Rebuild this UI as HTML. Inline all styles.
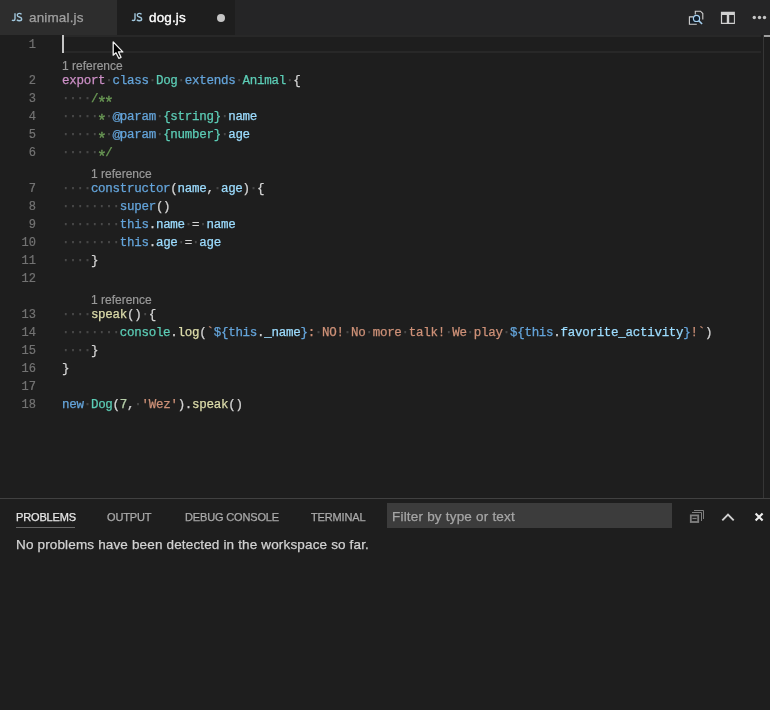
<!DOCTYPE html>
<html><head><meta charset="utf-8">
<style>
*{margin:0;padding:0;box-sizing:border-box}
html,body{width:770px;height:710px;overflow:hidden;background:#1e1e1e}
#wrap{position:absolute;left:0;top:0;width:770px;height:710px;will-change:transform}
body{position:relative;font-family:"Liberation Sans",sans-serif;-webkit-text-stroke:0.25px currentColor}
.abs{position:absolute}
#tabs{left:0;top:0;width:770px;height:35px;background:#252526}
.tab{top:0;height:35px}
.jsi{font-family:"Liberation Sans",sans-serif;font-weight:bold;font-size:10px;color:#7fb0c8;letter-spacing:-0.6px;line-height:10px}
.tname{font-size:13.5px;line-height:16px;letter-spacing:0.15px;white-space:pre}
#editor{left:0;top:35px;width:770px;height:463px;background:#1e1e1e;overflow:hidden}
.ln{position:absolute;left:0;width:36px;margin-top:1px;text-align:right;font-family:"Liberation Mono",monospace;font-size:12px;line-height:18px;color:#737373;-webkit-text-stroke:0.2px #737373}
.cl{position:absolute;left:62px;margin-top:0.5px;font-family:"Liberation Mono",monospace;font-size:12.5px;letter-spacing:-0.28px;line-height:18px;white-space:pre;color:#d4d4d4}
.lens{position:absolute;font-size:12px;line-height:18px;color:#999999;white-space:pre;-webkit-text-stroke:0.2px currentColor}
.w{color:rgba(227,228,226,0.17);-webkit-text-stroke:0.3px rgba(227,228,226,0.17)}
.at{display:inline-block;width:7.22px;letter-spacing:0;text-align:left;font-family:"Liberation Sans",sans-serif;font-size:10px;text-indent:-0.7px}
.ast{display:inline-block;transform:translateY(5px) scale(1.3)}
.k{color:#64a4da}.c{color:#cc8fc6}.t{color:#5ccdb6}.v{color:#9cdcfe}.f{color:#dcdcaa}.s{color:#ce9178}.g{color:#6a9955}.n{color:#b5cea8}
#panel{left:0;top:498px;width:770px;height:212px;background:#1e1e1e;border-top:1px solid #414141}
.ptab{top:12px;font-size:11px;line-height:13px;letter-spacing:-0.15px;white-space:pre;color:rgba(231,231,231,0.6)}
</style></head><body><div id="wrap">
<div id="tabs" class="abs">
  <div class="abs tab" style="left:0;width:117px;background:#2d2d2d">
    <svg class="abs" style="left:8px;top:8px" width="20" height="18" viewBox="0 0 20 18"><path d="M7 5.2V10.7Q7 12.5 5.4 12.5Q4.5 12.5 4 12" fill="none" stroke="#a0c6dc" stroke-width="1.4"/><path d="M13.5 6.4Q12.8 5.4 11.4 5.4Q9.3 5.4 9.3 7.2Q9.3 8.5 11.4 9Q13.7 9.6 13.7 11Q13.7 12.8 11.3 12.8Q9.7 12.8 8.9 11.8" fill="none" stroke="#a0c6dc" stroke-width="1.4"/></svg>
    <div class="abs tname" style="left:29px;top:10px;color:#a0a0a0">animal.js</div>
  </div>
  <div class="abs tab" style="left:117px;width:118px;background:#1e1e1e">
    <svg class="abs" style="left:11px;top:8px" width="20" height="18" viewBox="0 0 20 18"><path d="M7 5.2V10.7Q7 12.5 5.4 12.5Q4.5 12.5 4 12" fill="none" stroke="#a0c6dc" stroke-width="1.4"/><path d="M13.5 6.4Q12.8 5.4 11.4 5.4Q9.3 5.4 9.3 7.2Q9.3 8.5 11.4 9Q13.7 9.6 13.7 11Q13.7 12.8 11.3 12.8Q9.7 12.8 8.9 11.8" fill="none" stroke="#a0c6dc" stroke-width="1.4"/></svg>
    <div class="abs tname" style="left:32px;top:9.5px;color:#ffffff;-webkit-text-stroke:0.35px #ffffff">dog.js</div>
    <div class="abs" style="left:100px;top:14px;width:8px;height:8px;border-radius:50%;background:#c5c5c5"></div>
  </div>
  <!-- open preview icon -->
  <svg class="abs" style="left:680px;top:0" width="30" height="30" viewBox="0 0 30 30">
    <path d="M15.3 14.6V11.2H20.5L22.8 13.5V19.6" fill="none" stroke="#d0d0d0" stroke-width="1.1"/>
    <rect x="9.8" y="17" width="7" height="7" fill="#141c24"/>
    <path d="M13 16.9H9.4V24.2H16.8" fill="none" stroke="#d0d0d0" stroke-width="1.1"/>
    <circle cx="16.5" cy="18.4" r="3.1" fill="#0f1c2a" stroke="#a6d0f0" stroke-width="1.2"/>
    <path d="M18.7 20.6L22.1 24" stroke="#a6d0f0" stroke-width="1.5"/>
  </svg>
  <!-- split editor icon -->
  <svg class="abs" style="left:716px;top:6px" width="24" height="24" viewBox="0 0 24 24">
    <path d="M4.9 5.7H18.9V18.1H4.9Z M6.1 9H10.8V16.7H6.1Z M13.2 9H17.9V16.7H13.2Z" fill="#d0d0d0" fill-rule="evenodd"/>
  </svg>
  <!-- more icon -->
  <svg class="abs" style="left:750px;top:13px" width="20" height="10" viewBox="0 0 20 10">
    <circle cx="4.3" cy="4.5" r="1.7" fill="#c5c5c5"/>
    <circle cx="9.5" cy="4.5" r="1.7" fill="#c5c5c5"/>
    <circle cx="14.5" cy="4.5" r="1.7" fill="#c5c5c5"/>
  </svg>
</div>

<div id="editor" class="abs">
  <!-- current line highlight -->
  <div class="abs" style="left:62px;top:0;width:699px;height:18px;border-top:2px solid #282828;border-bottom:2px solid #282828"></div>
  <!-- line numbers -->
  <div class="ln" style="top:0">1</div>
  <div class="ln" style="top:36px">2</div>
  <div class="ln" style="top:54px">3</div>
  <div class="ln" style="top:72px">4</div>
  <div class="ln" style="top:90px">5</div>
  <div class="ln" style="top:108px">6</div>
  <div class="ln" style="top:144px">7</div>
  <div class="ln" style="top:162px">8</div>
  <div class="ln" style="top:180px">9</div>
  <div class="ln" style="top:198px">10</div>
  <div class="ln" style="top:216px">11</div>
  <div class="ln" style="top:234px">12</div>
  <div class="ln" style="top:270px">13</div>
  <div class="ln" style="top:288px">14</div>
  <div class="ln" style="top:306px">15</div>
  <div class="ln" style="top:324px">16</div>
  <div class="ln" style="top:342px">17</div>
  <div class="ln" style="top:360px">18</div>

  <!-- code lens -->
  <div class="lens" style="left:62px;top:22px">1 reference</div>
  <div class="lens" style="left:91px;top:130px">1 reference</div>
  <div class="lens" style="left:91px;top:256px">1 reference</div>

  <!-- code -->
  <div class="cl" style="top:36px"><span class="c">export</span><span class="w">·</span><span class="k">class</span><span class="w">·</span><span class="t">Dog</span><span class="w">·</span><span class="k">extends</span><span class="w">·</span><span class="t">Animal</span><span class="w">·</span>{</div>
  <div class="cl" style="top:54px"><span class="w">····</span><span class="g">/<span class="ast">*</span><span class="ast">*</span></span></div>
  <div class="cl" style="top:72px"><span class="w">·····</span><span class="g ast">*</span><span class="w">·</span><span class="k"><span class="at">@</span>param</span><span class="w">·</span><span class="t">{string}</span><span class="w">·</span><span class="v">name</span></div>
  <div class="cl" style="top:90px"><span class="w">·····</span><span class="g ast">*</span><span class="w">·</span><span class="k"><span class="at">@</span>param</span><span class="w">·</span><span class="t">{number}</span><span class="w">·</span><span class="v">age</span></div>
  <div class="cl" style="top:108px"><span class="w">·····</span><span class="g"><span class="ast">*</span>/</span></div>
  <div class="cl" style="top:144px"><span class="w">····</span><span class="k">constructor</span>(<span class="v">name</span>,<span class="w">·</span><span class="v">age</span>)<span class="w">·</span>{</div>
  <div class="cl" style="top:162px"><span class="w">········</span><span class="k">super</span>()</div>
  <div class="cl" style="top:180px"><span class="w">········</span><span class="k">this</span>.<span class="v">name</span><span class="w">·</span>=<span class="w">·</span><span class="v">name</span></div>
  <div class="cl" style="top:198px"><span class="w">········</span><span class="k">this</span>.<span class="v">age</span><span class="w">·</span>=<span class="w">·</span><span class="v">age</span></div>
  <div class="cl" style="top:216px"><span class="w">····</span>}</div>
  <div class="cl" style="top:270px"><span class="w">····</span><span class="f">speak</span>()<span class="w">·</span>{</div>
  <div class="cl" style="top:288px"><span class="w">········</span><span class="t">console</span>.<span class="f">log</span>(<span class="s">`</span><span class="k">${this</span>.<span class="v">_name</span><span class="k">}</span><span class="s">:<span class="w">·</span>NO!<span class="w">·</span>No<span class="w">·</span>more<span class="w">·</span>talk!<span class="w">·</span>We<span class="w">·</span>play<span class="w">·</span></span><span class="k">${this</span>.<span class="v">favorite_activity</span><span class="k">}</span><span class="s">!`</span>)</div>
  <div class="cl" style="top:306px"><span class="w">····</span>}</div>
  <div class="cl" style="top:324px">}</div>
  <div class="cl" style="top:360px"><span class="k">new</span><span class="w">·</span><span class="t">Dog</span>(<span class="n">7</span>,<span class="w">·</span><span class="s">'Wez'</span>).<span class="f">speak</span>()</div>

  <!-- cursor -->
  <div class="abs" style="left:62px;top:0;width:2px;height:18px;background:#c4c4c4"></div>

  <!-- overview ruler -->
  <div class="abs" style="left:763px;top:0;width:1px;height:463px;background:#363636"></div>
  <div class="abs" style="left:764px;top:0;width:6px;height:2px;background:#a0a0a0"></div>
</div>

<!-- mouse pointer -->
<svg class="abs" style="left:105px;top:36px" width="25" height="25" viewBox="0 0 25 25">
  <path d="M8.2 5.9V19.2L11 16.8L13.8 22.3L16 21.3L13.5 15.9H17.8Z" fill="#000" stroke="#f0f0f0" stroke-width="1.3" stroke-linejoin="round"/>
</svg>

<div id="panel" class="abs">
  <div class="abs ptab" style="left:16px;color:#e7e7e7">PROBLEMS</div>
  <div class="abs" style="left:16px;top:28px;width:59px;height:1px;background:#666666"></div>
  <div class="abs ptab" style="left:107px">OUTPUT</div>
  <div class="abs ptab" style="left:185px">DEBUG CONSOLE</div>
  <div class="abs ptab" style="left:311px">TERMINAL</div>
  <div class="abs" style="left:387px;top:4px;width:285px;height:25px;background:#3c3c3c"></div>
  <div class="abs" style="left:392px;top:10px;font-size:13.5px;line-height:16px;letter-spacing:0.2px;color:#a6a6a6;white-space:pre">Filter by type or text</div>
  <!-- collapse all -->
  <svg class="abs" style="left:680px;top:5px" width="26" height="22" viewBox="0 0 26 22">
    <path d="M12 8.5H21.5V17" fill="none" stroke="#808080" stroke-width="1"/>
    <path d="M14 6.5H23.5V15" fill="none" stroke="#808080" stroke-width="1"/>
    <rect x="10.8" y="11.4" width="7.4" height="6.6" fill="none" stroke="#808080" stroke-width="1.8"/>
    <rect x="12.4" y="13.9" width="4.2" height="1.2" fill="#808080"/>
  </svg>
  <!-- chevron up -->
  <svg class="abs" style="left:720px;top:13px" width="16" height="10" viewBox="0 0 16 10">
    <path d="M2.3 8.3L8 2.6L13.7 8.3" fill="none" stroke="#d0d0d0" stroke-width="1.9"/>
  </svg>
  <!-- close -->
  <svg class="abs" style="left:753px;top:13px" width="12" height="10" viewBox="0 0 12 10">
    <path d="M2.6 1.4L9.6 8.4M9.6 1.4L2.6 8.4" fill="none" stroke="#eeeeee" stroke-width="2.1"/>
  </svg>
  <div class="abs" style="left:16px;top:38px;font-size:13.5px;line-height:16px;letter-spacing:0.155px;color:#d2d2d2;white-space:pre">No problems have been detected in the workspace so far.</div>
</div>
</div></body></html>
